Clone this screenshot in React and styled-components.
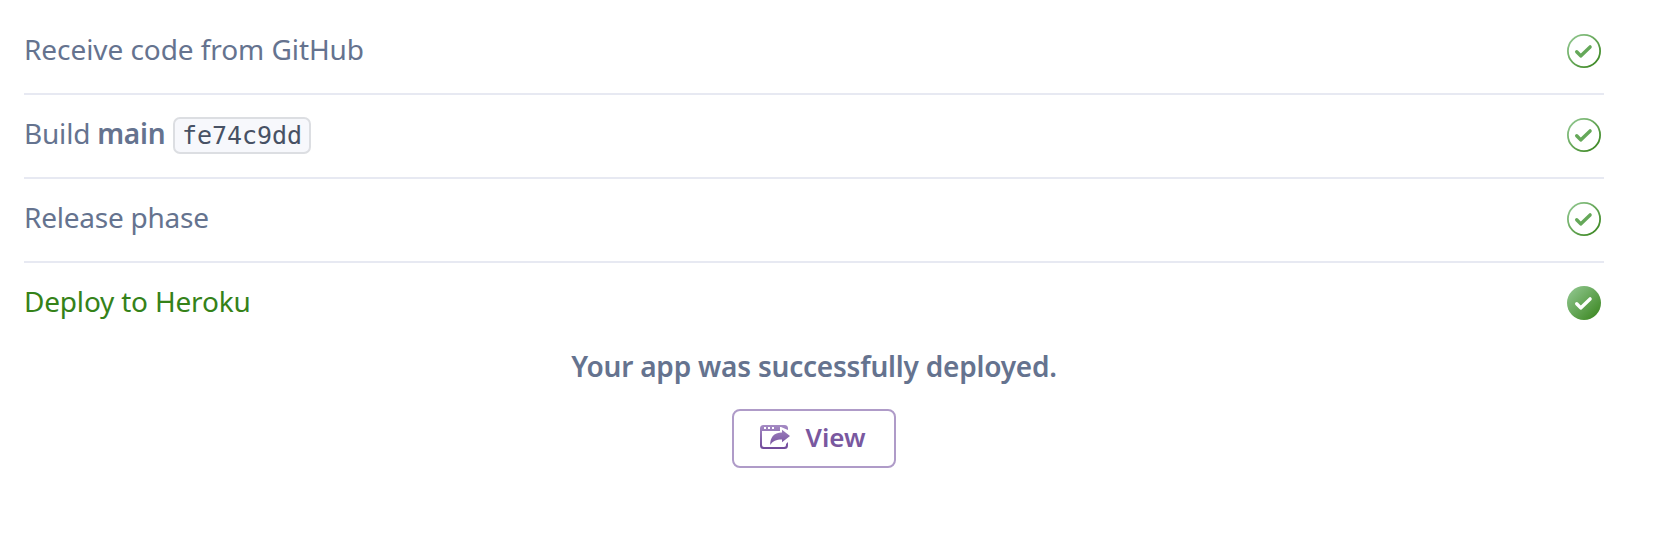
import React from "react";
import styled, { createGlobalStyle } from "styled-components";

const GlobalStyle = createGlobalStyle`
  body {
    margin: 0;
    background: #fff;
    font-family: "Noto Sans", "Open Sans", sans-serif;
    -webkit-font-smoothing: antialiased;
  }
`;

const Page = styled.main`
  box-sizing: border-box;
  height: 534px;
  padding: 9px 50px 0 24px;
`;

const Step = styled.div`
  box-sizing: border-box;
  display: flex;
  align-items: center;
  justify-content: space-between;
  height: ${(p) => (p.$last ? "82px" : "84px")};
  margin-top: ${(p) => (p.$first ? "2px" : "0")};
  padding: 0 3px 2px 0;
  border-bottom: ${(p) => (p.$last ? "none" : "2px solid #e7e9f2")};
  color: ${(p) => (p.$last ? "#358219" : "#65738f")};
`;

const Label = styled.div`
  display: flex;
  align-items: center;
  padding-bottom: 4px;
  font-size: 28px;
  line-height: 40px;
  letter-spacing: ${(p) => p.$spacing || "0"};
  white-space: pre;
`;

const Branch = styled.strong`
  margin-left: 7px;
  font-weight: 600;
`;

const Commit = styled.code`
  box-sizing: border-box;
  height: 37px;
  margin: 5px 0 0 7.5px;
  padding: 0 7px;
  border: 2px solid #dcdee2;
  border-radius: 7px;
  background: #f7f8fc;
  color: #475164;
  font: 25px/33px "DejaVu Sans Mono", monospace;
  letter-spacing: -0.05px;
`;

const Icon = styled.svg`
  display: block;
  flex: none;
`;

const Result = styled.section`
  display: flex;
  flex-direction: column;
  align-items: center;
`;

const Message = styled.p`
  margin: 1px 0 0;
  font-size: 28px;
  font-weight: 600;
  line-height: 40px;
  letter-spacing: -0.21px;
  color: #65738f;
`;

const ViewButton = styled.button`
  box-sizing: border-box;
  display: flex;
  align-items: center;
  width: 164px;
  height: 59px;
  margin-top: 23px;
  padding: 0 0 3px 26px;
  gap: 15.5px;
  border: 2px solid #af9bc8;
  border-radius: 8px;
  background: #fff;
  color: #79589f;
  font: 600 26px/36px "Noto Sans", "Open Sans", sans-serif;
`;

function CheckIcon({ id, filled }) {
  return (
    <Icon width="34" height="34" viewBox="0 0 34 34" aria-hidden="true">
      <defs>
        <linearGradient id={id} x1="0" y1="0" x2="1" y2="1">
          <stop offset="0" stopColor="#96cb96" />
          <stop offset="1" stopColor="#358219" />
        </linearGradient>
      </defs>
      <circle
        cx="17"
        cy="17"
        r={filled ? 17 : 16.1}
        fill={filled ? `url(#${id})` : "none"}
        stroke={filled ? "none" : `url(#${id})`}
        strokeWidth="1.8"
      />
      <path
        d="M9.7 17.8L13.7 21.9L23.1 12.9"
        fill="none"
        stroke={filled ? "#fff" : "#65a859"}
        strokeWidth="3.4"
        strokeLinecap="round"
        strokeLinejoin="round"
      />
    </Icon>
  );
}

function OpenAppIcon() {
  return (
    <Icon width="30" height="24" viewBox="0 0 30 24" aria-hidden="true">
      <defs>
        <linearGradient id="open-app" x1="0" y1="0" x2="0" y2="24" gradientUnits="userSpaceOnUse">
          <stop offset="0" stopColor="#a58bc4" />
          <stop offset="1" stopColor="#70499a" />
        </linearGradient>
      </defs>
      <path
        fill="url(#open-app)"
        fillRule="evenodd"
        d="M3.5 0H24.5Q28 0 28 3.5V5L21 1.9H20V6H2V20Q2 22 4 22H24Q26 22 26 20V19L28 17V20.5Q28 24 24.5 24H3.5Q0 24 0 20.5V3.5Q0 0 3.5 0ZM4 2V4H6V2ZM8 2V4H10V2ZM12 2V4H14V2Z"
      />
      <path
        fill="url(#open-app)"
        d="M22 4.8L30 11L22 17.2V14.6C16 14.6 13 16 10.3 20C10 13 13.5 7.6 22 7.6Z"
      />
    </Icon>
  );
}

export default function App() {
  return (
    <>
      <GlobalStyle />
      <Page>
        <Step $first>
          <Label $spacing="-0.07px">Receive code from GitHub</Label>
          <CheckIcon id="receive" />
        </Step>
        <Step>
          <Label $spacing="-0.2px">
            Build<Branch>main</Branch>
            <Commit>fe74c9dd</Commit>
          </Label>
          <CheckIcon id="build" />
        </Step>
        <Step>
          <Label $spacing="-0.24px">Release phase</Label>
          <CheckIcon id="release" />
        </Step>
        <Step $last>
          <Label $spacing="-0.2px">Deploy to Heroku</Label>
          <CheckIcon id="deploy" filled />
        </Step>
        <Result>
          <Message>Your app was successfully deployed.</Message>
          <ViewButton type="button">
            <OpenAppIcon />
            View
          </ViewButton>
        </Result>
      </Page>
    </>
  );
}
